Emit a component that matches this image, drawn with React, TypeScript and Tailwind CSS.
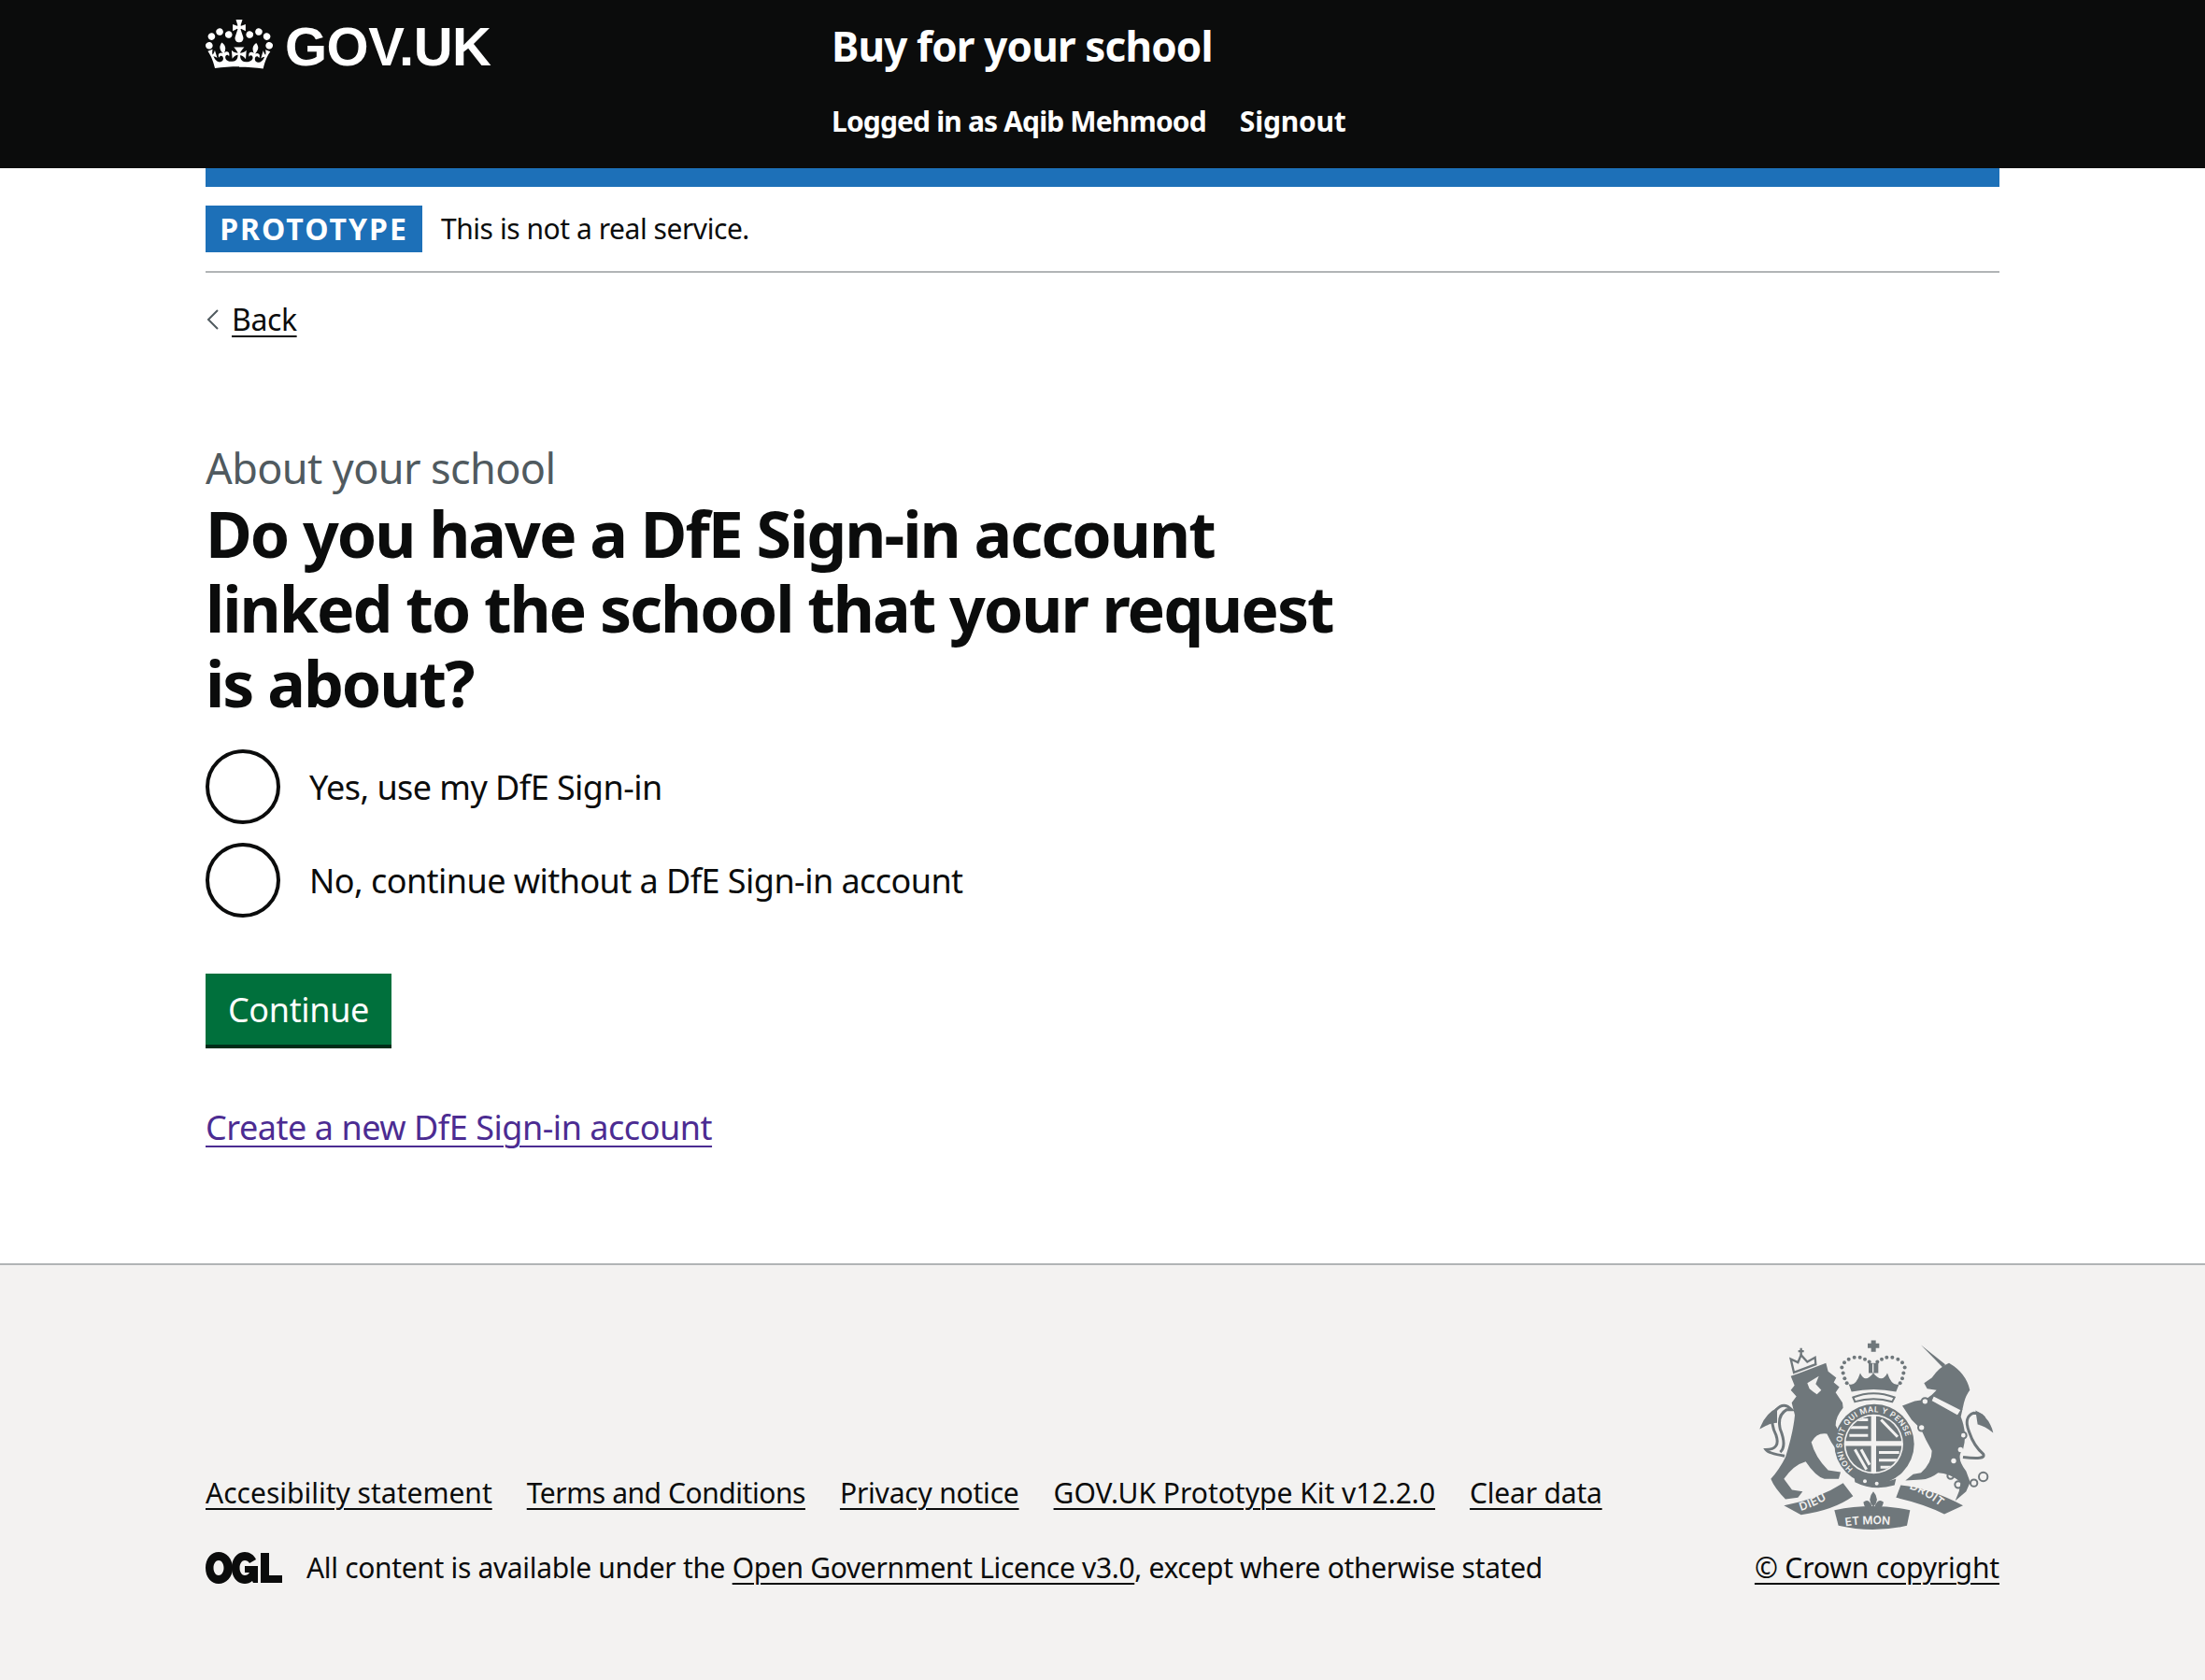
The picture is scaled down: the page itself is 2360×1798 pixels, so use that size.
const crownPath =
  "M25 30.2c3.5 1.5 7.7-.2 9.1-3.7 1.5-3.6-.2-7.8-3.9-9.2-3.6-1.4-7.6.3-9.1 3.9-1.4 3.5.3 7.5 3.9 9zM9 39.5c3.6 1.5 7.8-.2 9.2-3.7 1.5-3.6-.2-7.8-3.9-9.1-3.6-1.5-7.6.2-9.1 3.8-1.4 3.5.3 7.5 3.8 9zM4.4 57.2c3.5 1.5 7.7-.2 9.1-3.8 1.5-3.6-.2-7.7-3.9-9.1-3.5-1.5-7.6.3-9.1 3.8-1.4 3.5.3 7.6 3.9 9.1zm38.3-21.4c3.5 1.5 7.7-.2 9.1-3.8 1.5-3.6-.2-7.7-3.9-9.1-3.6-1.5-7.6.3-9.1 3.8-1.3 3.6.4 7.7 3.9 9.1zm64.4-5.6c-3.6 1.5-7.8-.2-9.1-3.7-1.5-3.6.2-7.8 3.8-9.2 3.6-1.4 7.7.3 9.2 3.9 1.3 3.5-.4 7.5-3.9 9zm15.9 9.3c-3.6 1.5-7.7-.2-9.1-3.7-1.5-3.6.2-7.8 3.7-9.1 3.6-1.5 7.7.2 9.2 3.8 1.5 3.5-.3 7.5-3.8 9zm4.7 17.7c-3.6 1.5-7.8-.2-9.2-3.8-1.5-3.6.2-7.7 3.9-9.1 3.6-1.5 7.7.3 9.2 3.8 1.3 3.5-.4 7.6-3.9 9.1zM89.3 35.8c-3.6 1.5-7.8-.2-9.2-3.8-1.4-3.6.2-7.7 3.9-9.1 3.6-1.5 7.7.3 9.2 3.8 1.4 3.6-.3 7.7-3.9 9.1zM69.7 17.7l8.9 4.7V9.3l-8.9 2.8c-.2-.3-.5-.6-.9-.9L72.4 0H59.6l3.5 11.2c-.3.3-.6.5-.9.9l-8.8-2.8v13.1l8.8-4.7c.3.3.6.7.9.9l-5 15.4v.1c-.2.8-.4 1.6-.4 2.4 0 4.1 3.1 7.5 7 8.1h.2c.3 0 .7.1 1 .1.4 0 .7 0 1-.1h.2c4-.6 7.1-4.1 7.1-8.1 0-.8-.1-1.7-.4-2.4V34l-5.1-15.4c.4-.2.7-.6 1-.9zM66 92.8c16.9 0 32.8 1.1 47.1 3.2 4-16.9 8.9-26.7 14-33.5l-9.6-3.4c1 4.9 1.1 7.2 0 10.2-1.5-1.4-3-4.3-4.2-8.7L108.6 76c2.8-2 5-3.2 7.5-3.3-4.4 9.4-10 11.9-13.6 11.2-4.3-.8-6.3-4.6-5.6-7.9 1-4.7 5.7-5.9 8-.5 4.3-8.7-3-11.4-7.6-8.8 7.1-7.2 7.9-13.5 2.1-21.1-8 6.1-8.1 12.3-4.5 20.8-4.7-5.4-12.1-2.5-9.5 6.2 3.4-5.2 7.9-2 7.2 3.1-.6 4.3-6.4 7.8-13.5 7.2-10.3-.9-10.9-8-11.2-13 2.5-.5 7.1 1.8 11 7.3L80.2 60c-4.1 4.4-8 5.3-12.3 5.4 1.4-4.4 8-11.6 8-11.6H55.5s6.4 7.2 7.9 11.6c-4.2-.1-8-1-12.3-5.4l1.4 16.4c3.9-5.5 8.5-7.7 10.9-7.3-.3 5-.7 12.1-11 13-7.2.6-12.9-2.9-13.5-7.2-.7-5 3.8-8.3 7.1-3.1 2.7-8.7-4.6-11.6-9.4-6.2 3.7-8.5 3.6-14.7-4.6-20.8-5.8 7.6-5 13.9 2.2 21.1-4.7-2.6-11.9.1-7.7 8.8 2.3-5.5 7.1-4.2 8.1.5.7 3.3-1.3 7.1-5.7 7.9-3.5.7-9-1.8-13.5-11.2 2.5.1 4.7 1.3 7.5 3.3l-4.7-15.4c-1.2 4.4-2.7 7.2-4.3 8.7-1.1-3-.9-5.3 0-10.2l-9.5 3.4c5 6.9 9.9 16.7 14 33.5 14.8-2.1 30.8-3.2 47.7-3.2z";

const crownDots = [
  [340, 150], [336, 132], [344, 116], [358, 106], [376, 100], [394, 100], [410, 106], [424, 114],
  [450, 114], [464, 106], [480, 100], [498, 100], [516, 106], [530, 116], [538, 132], [534, 150],
  [345, 167], [530, 167], [352, 182], [523, 182],
];

function Crest() {
  const c = "#6f777b";
  const bg = "#f3f2f1";
  return (
    <svg viewBox="65 38 765 620" width="255" height="207" fill={c} className="block">
      <defs>
        <path id="garter" d="M372 458 A104 104 0 1 1 508 458" fill="none" />
        <path id="scrollLeft" d="M205 592 Q270 572 340 522" fill="none" />
        <path id="scrollMid" d="M345 642 Q435 628 525 642" fill="none" />
        <path id="scrollRight" d="M552 522 Q610 540 670 594" fill="none" />
        <clipPath id="shieldClip">
          <circle cx="438" cy="378" r="90" />
        </clipPath>
      </defs>

      {/* lion */}
      <path d="M172 160 L200 150 L285 118 L292 145 L318 165 L310 180 L328 195 L316 212 L338 245 L340 262 Q316 290 316 318 L345 372 Q340 398 318 396 L302 372 L288 345 Q255 340 238 372 Q250 420 292 462 L332 468 L326 490 L280 490 Q250 480 220 434 Q180 445 150 490 L176 525 L210 530 L195 550 L155 555 Q120 520 108 490 Q135 460 155 420 Q180 340 185 285 L175 245 L190 225 L172 205 L184 190 Z" />
      <path d="M225 182 L262 160 L252 185 L270 205 L256 218 L244 210 L232 200 Z" fill={bg} />
      <path d="M182 148 L172 105 L195 116 L205 92 L225 114 L250 100 L252 122 Z" fill="none" stroke={c} strokeWidth="7" />
      <path d="M205 70 V92 M196 80 H214" stroke={c} strokeWidth="7" />
      <path d="M152 416 Q100 408 92 396 Q140 395 125 350 Q100 300 125 268 Q150 240 175 268 L158 268 Q128 285 138 330 Q160 385 138 404" fill="none" stroke={c} strokeWidth="9" />
      <path d="M128 262 Q90 280 72 330 Q105 310 128 310 Z" />

      {/* unicorn */}
      <path d="M590 60 L668 122 L660 132 Z" />
      <path d="M600 182 L625 165 Q650 130 680 118 Q735 150 747 205 Q735 220 728 245 L718 290 Q740 345 725 395 Q700 420 735 465 L748 500 L735 530 L700 560 L712 530 L718 500 Q680 470 645 470 Q620 490 590 492 L540 495 L565 475 L590 470 Q625 440 625 400 Q605 365 590 330 L560 300 L530 255 L570 240 L605 235 L625 220 L640 205 L610 200 Z" />
      <path d="M630 222 L720 268 L708 288 L622 240 Z" fill={bg} stroke={c} strokeWidth="5" />
      <circle cx="603" cy="241" r="11" fill={bg} stroke={c} strokeWidth="6" />
      <circle cx="592" cy="325" r="11" fill={bg} stroke={c} strokeWidth="6" />
      <circle cx="726" cy="350" r="10" fill={bg} stroke={c} strokeWidth="6" />
      <circle cx="717" cy="396" r="8" fill={bg} />
      <circle cx="695" cy="432" r="8" fill={bg} />
      <g fill="none" stroke={c} strokeWidth="6">
        <circle cx="685" cy="480" r="10" />
        <circle cx="710" cy="508" r="11" />
        <circle cx="760" cy="503" r="11" />
        <circle cx="790" cy="483" r="14" />
      </g>
      <path d="M725 420 Q800 430 790 410 Q760 385 745 340 Q725 290 760 278 Q790 280 795 300" fill="none" stroke={c} strokeWidth="9" />
      <path d="M765 270 Q810 290 822 342 Q795 320 772 315 Z" />

      {/* royal crown */}
      <path d="M430 45 H445 V55 H456 V70 H445 V82 H430 V70 H419 V55 H430 Z" />
      <path d="M422 118 H453 V150 H422 Z" />
      <path d="M436 120 V148" stroke={bg} strokeWidth="4" />
      {crownDots.map(([x, y], i) => (
        <circle key={i} cx={x} cy={y} r="6" />
      ))}
      <path d="M358 185 Q380 195 395 150 Q410 185 437 150 Q465 185 482 150 Q497 195 520 185 L510 210 Q437 195 367 210 Z" />
      <path d="M372 228 Q437 202 505 228 L498 242 Q437 224 378 242 Z" fill="none" stroke={c} strokeWidth="6" />

      {/* garter and shield */}
      <circle cx="440" cy="378" r="128" />
      <circle cx="438" cy="378" r="95" fill={bg} />
      <text fontFamily="Inter, sans-serif" fontSize="25" fontWeight="600" fill={bg} letterSpacing="1.5">
        <textPath href="#garter">HONI SOIT QUI MAL Y PENSE</textPath>
      </text>
      <g clipPath="url(#shieldClip)">
        <path d="M345 285 H430 V368 H345 Z M446 285 H530 V368 H446 Z M345 384 H430 V470 H345 Z M446 384 H530 V470 H446 Z" />
        <path d="M360 300 H420 M355 325 H420 M360 350 H420 M462 300 L515 355 M378 395 L415 460 M398 395 L425 445 M455 405 H520 M455 430 H520 M460 452 H505" stroke={bg} strokeWidth="9" fill="none" />
      </g>
      <path d="M375 480 Q437 515 510 490 L505 510 Q437 530 378 500 Z" />
      <circle cx="410" cy="497" r="6" fill={bg} />
      <circle cx="448" cy="505" r="6" fill={bg} />

      {/* motto scroll */}
      <path d="M150 575 Q260 555 340 503 L372 545 Q310 590 205 605 Z" />
      <path d="M312 590 Q435 565 555 590 L545 640 Q435 665 325 640 Z" />
      <path d="M525 510 Q620 520 725 575 L665 603 Q600 570 510 550 Z" />
      <g fontFamily="Inter, sans-serif" fontSize="36" fontWeight="600" fill={bg}>
        <text letterSpacing="2">
          <textPath href="#scrollLeft">DIEU</textPath>
        </text>
        <text fontSize="36">
          <textPath href="#scrollMid" startOffset="3">ET MON</textPath>
        </text>
        <text letterSpacing="1">
          <textPath href="#scrollRight">DROIT</textPath>
        </text>
      </g>
      <path d="M437 530 Q415 555 437 580 Q460 555 437 530 Z M405 565 Q420 550 432 575 L425 590 Q410 590 405 565 Z M470 565 Q455 550 442 575 L449 590 Q464 590 470 565 Z M420 590 H455 V598 H420 Z" />
    </svg>
  );
}

function OglLogo() {
  return (
    <svg viewBox="0 0 82 34" width="82" height="34" fill="#0b0c0c" className="block shrink-0">
      <path d="M14 0C6 0 0 7 0 17s6 17 14 17 15-7 15-17S22 0 14 0Zm0 9c3 0 5.500 3.500 5.500 8S17 25 14 25s-5.500-3.500-5.500-8S11 9 14 9Z" />
      <path d="M42 0c-8 0-14 7-14 17s6 17 14 17c3 0 6-1 8-3l1 2h5V15H42v7h5c-1 2-3 3-5 3-3 0-5.500-3.500-5.500-8S39 9 42 9c2 0 4 1 5 3l7-4c-2-5-7-8-12-8Z" />
      <path d="M59 1h9v24h14v8H59Z" />
    </svg>
  );
}

const footerLinks = [
  { label: "Accesibility statement", cls: "" },
  { label: "Terms and Conditions", cls: "tracking-[-0.45px]" },
  { label: "Privacy notice", cls: "tracking-[-0.2px]" },
  { label: "GOV.UK Prototype Kit v12.2.0", cls: "" },
  { label: "Clear data", cls: "tracking-[-0.2px]" },
];

export default function App() {
  return (
    <div className="min-h-[1798px] flex flex-col bg-white text-[#0b0c0c] font-['Noto_Sans',sans-serif]">
      <header className="h-[180px] bg-[#0b0c0c] text-white">
        <div className="w-[1920px] mx-auto flex">
          <a className="w-[670px] pt-[22px] flex items-start gap-[13px]">
            <svg viewBox="0 0 132 97" width="72" height="53" fill="currentColor" className="shrink-0 mt-[-1px]">
              <path fillRule="evenodd" d={crownPath} />
            </svg>
            <span className="font-['Liberation_Sans',sans-serif] font-bold text-[58px] leading-[56px] tracking-[-0.5px]">GOV.UK</span>
          </a>
          <div>
            <div className="pt-[21px] text-[44px] leading-[56px] font-bold tracking-[-0.85px]">Buy for your school</div>
            <nav className="mt-[26px] flex gap-[36px] text-[30px] leading-[54px] font-bold tracking-[-0.85px]">
              <span>Logged in as Aqib Mehmood</span>
              <a className="tracking-[-0.2px]">Signout</a>
            </nav>
          </div>
        </div>
      </header>

      <main className="w-[1920px] mx-auto flex-1">
        <div className="h-[20px] bg-[#1d70b8]" />
        <div className="h-[92px] pt-[20px] border-b-2 border-[#b1b4b6] flex items-start gap-[20px]">
          <strong className="h-[50px] w-[232px] bg-[#1d70b8] text-white text-[32px] leading-[50px] font-bold tracking-[2px] text-center">PROTOTYPE</strong>
          <span className="text-[30px] leading-[50px] tracking-[-0.45px]">This is not a real service.</span>
        </div>

        <a className="mt-[30px] flex items-center gap-[13px] h-[40px] text-[32px] leading-[40px] tracking-[-0.4px]">
          <svg viewBox="0 0 14 24" width="14" height="24" fill="none" stroke="#505a5f" strokeWidth="2" className="shrink-0 ml-[1px]">
            <path d="M12 2 2 12l10 10" />
          </svg>
          <span className="underline underline-offset-[5px] decoration-2">Back</span>
        </a>

        <p className="mt-[111px] text-[45px] leading-[56px] text-[#505a5f] tracking-[-0.6px]">About your school</p>
        <h1 className="mt-[2px] w-[1240px] text-[68px] leading-[80px] font-bold tracking-[-2px]">
          Do you have a DfE Sign-in account linked to the school that your request is about?
        </h1>

        <div className="mt-[31px] flex flex-col gap-[20px]">
          {["Yes, use my DfE Sign-in", "No, continue without a DfE Sign-in account"].map((label) => (
            <label key={label} className="flex items-center gap-[31px] h-[80px]">
              <span className="w-[80px] h-[80px] rounded-full border-4 border-[#0b0c0c] bg-white shrink-0" />
              <span className="pt-[2px] text-[36px] leading-[50px] tracking-[-0.55px]">{label}</span>
            </label>
          ))}
        </div>

        <button type="button" className="block mt-[60px] w-[199px] h-[76px] bg-[#00703c] text-white text-[36px] leading-[78px] tracking-[-0.35px] shadow-[0_4px_0_#002d18]">
          Continue
        </button>

        <a className="block mt-[64px] w-fit text-[36px] leading-[50px] text-[#4c2c92] underline underline-offset-[6px] decoration-2 tracking-[-0.47px]">
          Create a new DfE Sign-in account
        </a>
      </main>

      <footer className="h-[446px] bg-[#f3f2f1] border-t-2 border-[#b1b4b6] text-[30px] leading-[40px]">
        <div className="w-[1920px] mx-auto flex justify-between items-end pt-[78px]">
          <div className="pb-[7px]">
            <ul className="flex gap-[37px]">
              {footerLinks.map((l) => (
                <li key={l.label} className={l.cls}>
                  <a className="underline underline-offset-[5px] decoration-2">{l.label}</a>
                </li>
              ))}
            </ul>
            <div className="mt-[40px] flex items-center gap-[26px]">
              <OglLogo />
              <span className="tracking-[-0.33px]">
                All content is available under the{" "}
                <a className="underline underline-offset-[5px] decoration-2">Open Government Licence v3.0</a>, except where otherwise stated
              </span>
            </div>
          </div>
          <div className="flex flex-col items-center pb-[7px]">
            <Crest />
            <a className="mt-[19px] underline underline-offset-[5px] decoration-2 tracking-[-0.15px]">© Crown copyright</a>
          </div>
        </div>
      </footer>
    </div>
  );
}
